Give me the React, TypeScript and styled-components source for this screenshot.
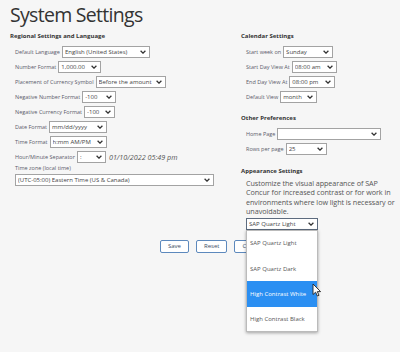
import React from "react";
import styled, { createGlobalStyle } from "styled-components";

const GlobalStyle = createGlobalStyle`
  html, body {
    margin: 0;
    padding: 0;
    background: #f6f6f6;
    font-family: "Open Sans", "Noto Sans", sans-serif;
    color: #333;
  }
`;

const Page = styled.div`
  position: relative;
  width: 400px;
  height: 352px;
  overflow: hidden;
  padding: 1px 10px 0 10px;
  box-sizing: border-box;
`;

const Title = styled.h1`
  margin: 0;
  font-size: 19.5px;
  font-weight: 400;
  line-height: 28px;
  color: #333;
  letter-spacing: -0.7px;
`;

const Columns = styled.div`
  display: flex;
  margin-top: 2px;
`;

const Column = styled.div<{ $width: number }>`
  width: ${(p) => p.$width}px;
  display: flex;
  flex-direction: column;
`;

const Heading = styled.div<{ $top?: number }>`
  font-size: 6px;
  font-weight: 700;
  color: #333;
  line-height: 10px;
  margin-top: ${(p) => p.$top ?? 0}px;
  margin-bottom: 3px;
`;

const Rows = styled.div`
  display: flex;
  flex-direction: column;
  padding-left: 5px;
`;

const Row = styled.div`
  display: flex;
  align-items: center;
  height: 15px;
  gap: 2px;
`;

const Label = styled.span`
  font-size: 5.5px;
  color: #5b5b6b;
  white-space: nowrap;
`;

const Select = styled.div<{ $width: number; $focus?: boolean }>`
  position: relative;
  flex: none;
  width: ${(p) => p.$width}px;
  height: 12px;
  box-sizing: border-box;
  border: 1px solid ${(p) => (p.$focus ? "#5d6b7e" : "#a3a3a3")};
  background: #fff;
  display: flex;
  align-items: center;
  padding: 0 2px;
  font-size: 6px;
  color: #444;
  white-space: nowrap;
`;

const SelectText = styled.span`
  flex: 1;
  overflow: hidden;
`;

const Chevron = () => (
  <svg width="6" height="4" viewBox="0 0 6 4" style={{ flex: "none", marginRight: 1 }}>
    <path d="M0.6 0.7 L3 3.1 L5.4 0.7" fill="none" stroke="#333" strokeWidth="1.3" />
  </svg>
);

const DateText = styled.span`
  font-size: 7.2px;
  font-style: italic;
  color: #555;
  margin-left: 1px;
  white-space: nowrap;
`;

const TzBlock = styled.div`
  padding-left: 5px;
`;

const TzLabel = styled.div`
  font-size: 5.5px;
  color: #5b5b6b;
  line-height: 8px;
  margin-bottom: 2px;
`;

const Description = styled.p`
  margin: 0 0 0 5px;
  width: 150px;
  font-size: 7.2px;
  line-height: 9.4px;
  color: #555;
  letter-spacing: -0.05px;
`;

const AppearanceSelect = styled.div`
  position: relative;
  margin: 1px 0 0 5px;
`;

const Dropdown = styled.div`
  position: absolute;
  left: 0;
  top: 12px;
  width: 72px;
  height: 102px;
  background: #fff;
  border: 1px solid #bbb;
  box-shadow: 0 1px 3px rgba(0, 0, 0, 0.35);
  box-sizing: border-box;
  z-index: 2;
`;

const Option = styled.div<{ $active?: boolean }>`
  height: 25.3px;
  display: flex;
  align-items: center;
  padding-left: 3px;
  font-size: 6px;
  color: ${(p) => (p.$active ? "#fff" : "#555")};
  background: ${(p) => (p.$active ? "#2b8ff2" : "transparent")};
  white-space: nowrap;
`;

const Cursor = styled.svg`
  position: absolute;
  left: 312px;
  top: 283px;
  z-index: 3;
`;

const Footer = styled.div`
  display: flex;
  gap: 7px;
  padding-left: 150px;
  margin-top: 10px;
`;

const Button = styled.button`
  height: 13px;
  box-sizing: border-box;
  border: 1px solid #5d89bd;
  border-radius: 2px;
  background: #fff;
  font-family: "Open Sans", "Noto Sans", sans-serif;
  font-size: 6px;
  color: #3d4d66;
  padding: 0 7px;
  line-height: 11px;
`;

const sel = (w: number, text: string, focus?: boolean) => (
  <Select $width={w} $focus={focus}>
    <SelectText>{text}</SelectText>
    <Chevron />
  </Select>
);

const App: React.FC = () => {
  return (
    <Page>
      <GlobalStyle />
      <Title>System Settings</Title>
      <Columns>
        <Column $width={231}>
          <Heading>Regional Settings and Language</Heading>
          <Rows>
            <Row>
              <Label>Default Language</Label>
              {sel(88, "English (United States)")}
            </Row>
            <Row>
              <Label>Number Format</Label>
              {sel(43, "1,000.00")}
            </Row>
            <Row>
              <Label>Placement of Currency Symbol</Label>
              {sel(70, "Before the amount")}
            </Row>
            <Row>
              <Label>Negative Number Format</Label>
              {sel(34, "-100")}
            </Row>
            <Row>
              <Label>Negative Currency Format</Label>
              {sel(31, "-100")}
            </Row>
            <Row>
              <Label>Date Format</Label>
              {sel(58, "mm/dd/yyyy")}
            </Row>
            <Row>
              <Label>Time Format</Label>
              {sel(57, "h:mm AM/PM")}
            </Row>
            <Row>
              <Label>Hour/Minute Separator</Label>
              {sel(29, "  :")}
              <DateText>01/10/2022 05:49 pm</DateText>
            </Row>
          </Rows>
          <TzBlock>
            <TzLabel>Time zone (local time)</TzLabel>
            {sel(199, "(UTC-05:00) Eastern Time (US & Canada)")}
          </TzBlock>
        </Column>
        <Column $width={149}>
          <Heading>Calendar Settings</Heading>
          <Rows>
            <Row>
              <Label>Start week on</Label>
              {sel(50, "Sunday")}
            </Row>
            <Row>
              <Label>Start Day View At</Label>
              {sel(45, "08:00 am")}
            </Row>
            <Row>
              <Label>End Day View At</Label>
              {sel(46, "08:00 pm")}
            </Row>
            <Row>
              <Label>Default View</Label>
              {sel(37, "month")}
            </Row>
          </Rows>
          <Heading $top={9}>Other Preferences</Heading>
          <Rows>
            <Row>
              <Label>Home Page</Label>
              {sel(104, "")}
            </Row>
            <Row>
              <Label>Rows per page</Label>
              {sel(41, "25")}
            </Row>
          </Rows>
          <Heading $top={10}>Appearance Settings</Heading>
          <Description>
            Customize the visual appearance of SAP Concur for increased contrast or for work in
            environments where low light is necessary or unavoidable.
          </Description>
          <AppearanceSelect>
            {sel(72, "SAP Quartz Light", true)}
            <Dropdown>
              <Option>SAP Quartz Light</Option>
              <Option>SAP Quartz Dark</Option>
              <Option $active>High Contrast White</Option>
              <Option>High Contrast Black</Option>
            </Dropdown>
          </AppearanceSelect>
        </Column>
      </Columns>
      <Footer>
        <Button>Save</Button>
        <Button>Reset</Button>
        <Button>Cancel</Button>
      </Footer>
      <Cursor width="10" height="14" viewBox="0 0 10 14">
        <path d="M1 1 L1 11.5 L3.6 9.2 L5.4 13 L7 12.3 L5.3 8.6 L8.6 8.6 Z" fill="#fff" stroke="#222" strokeWidth="0.9" strokeLinejoin="round" />
      </Cursor>
    </Page>
  );
};

export default App;
